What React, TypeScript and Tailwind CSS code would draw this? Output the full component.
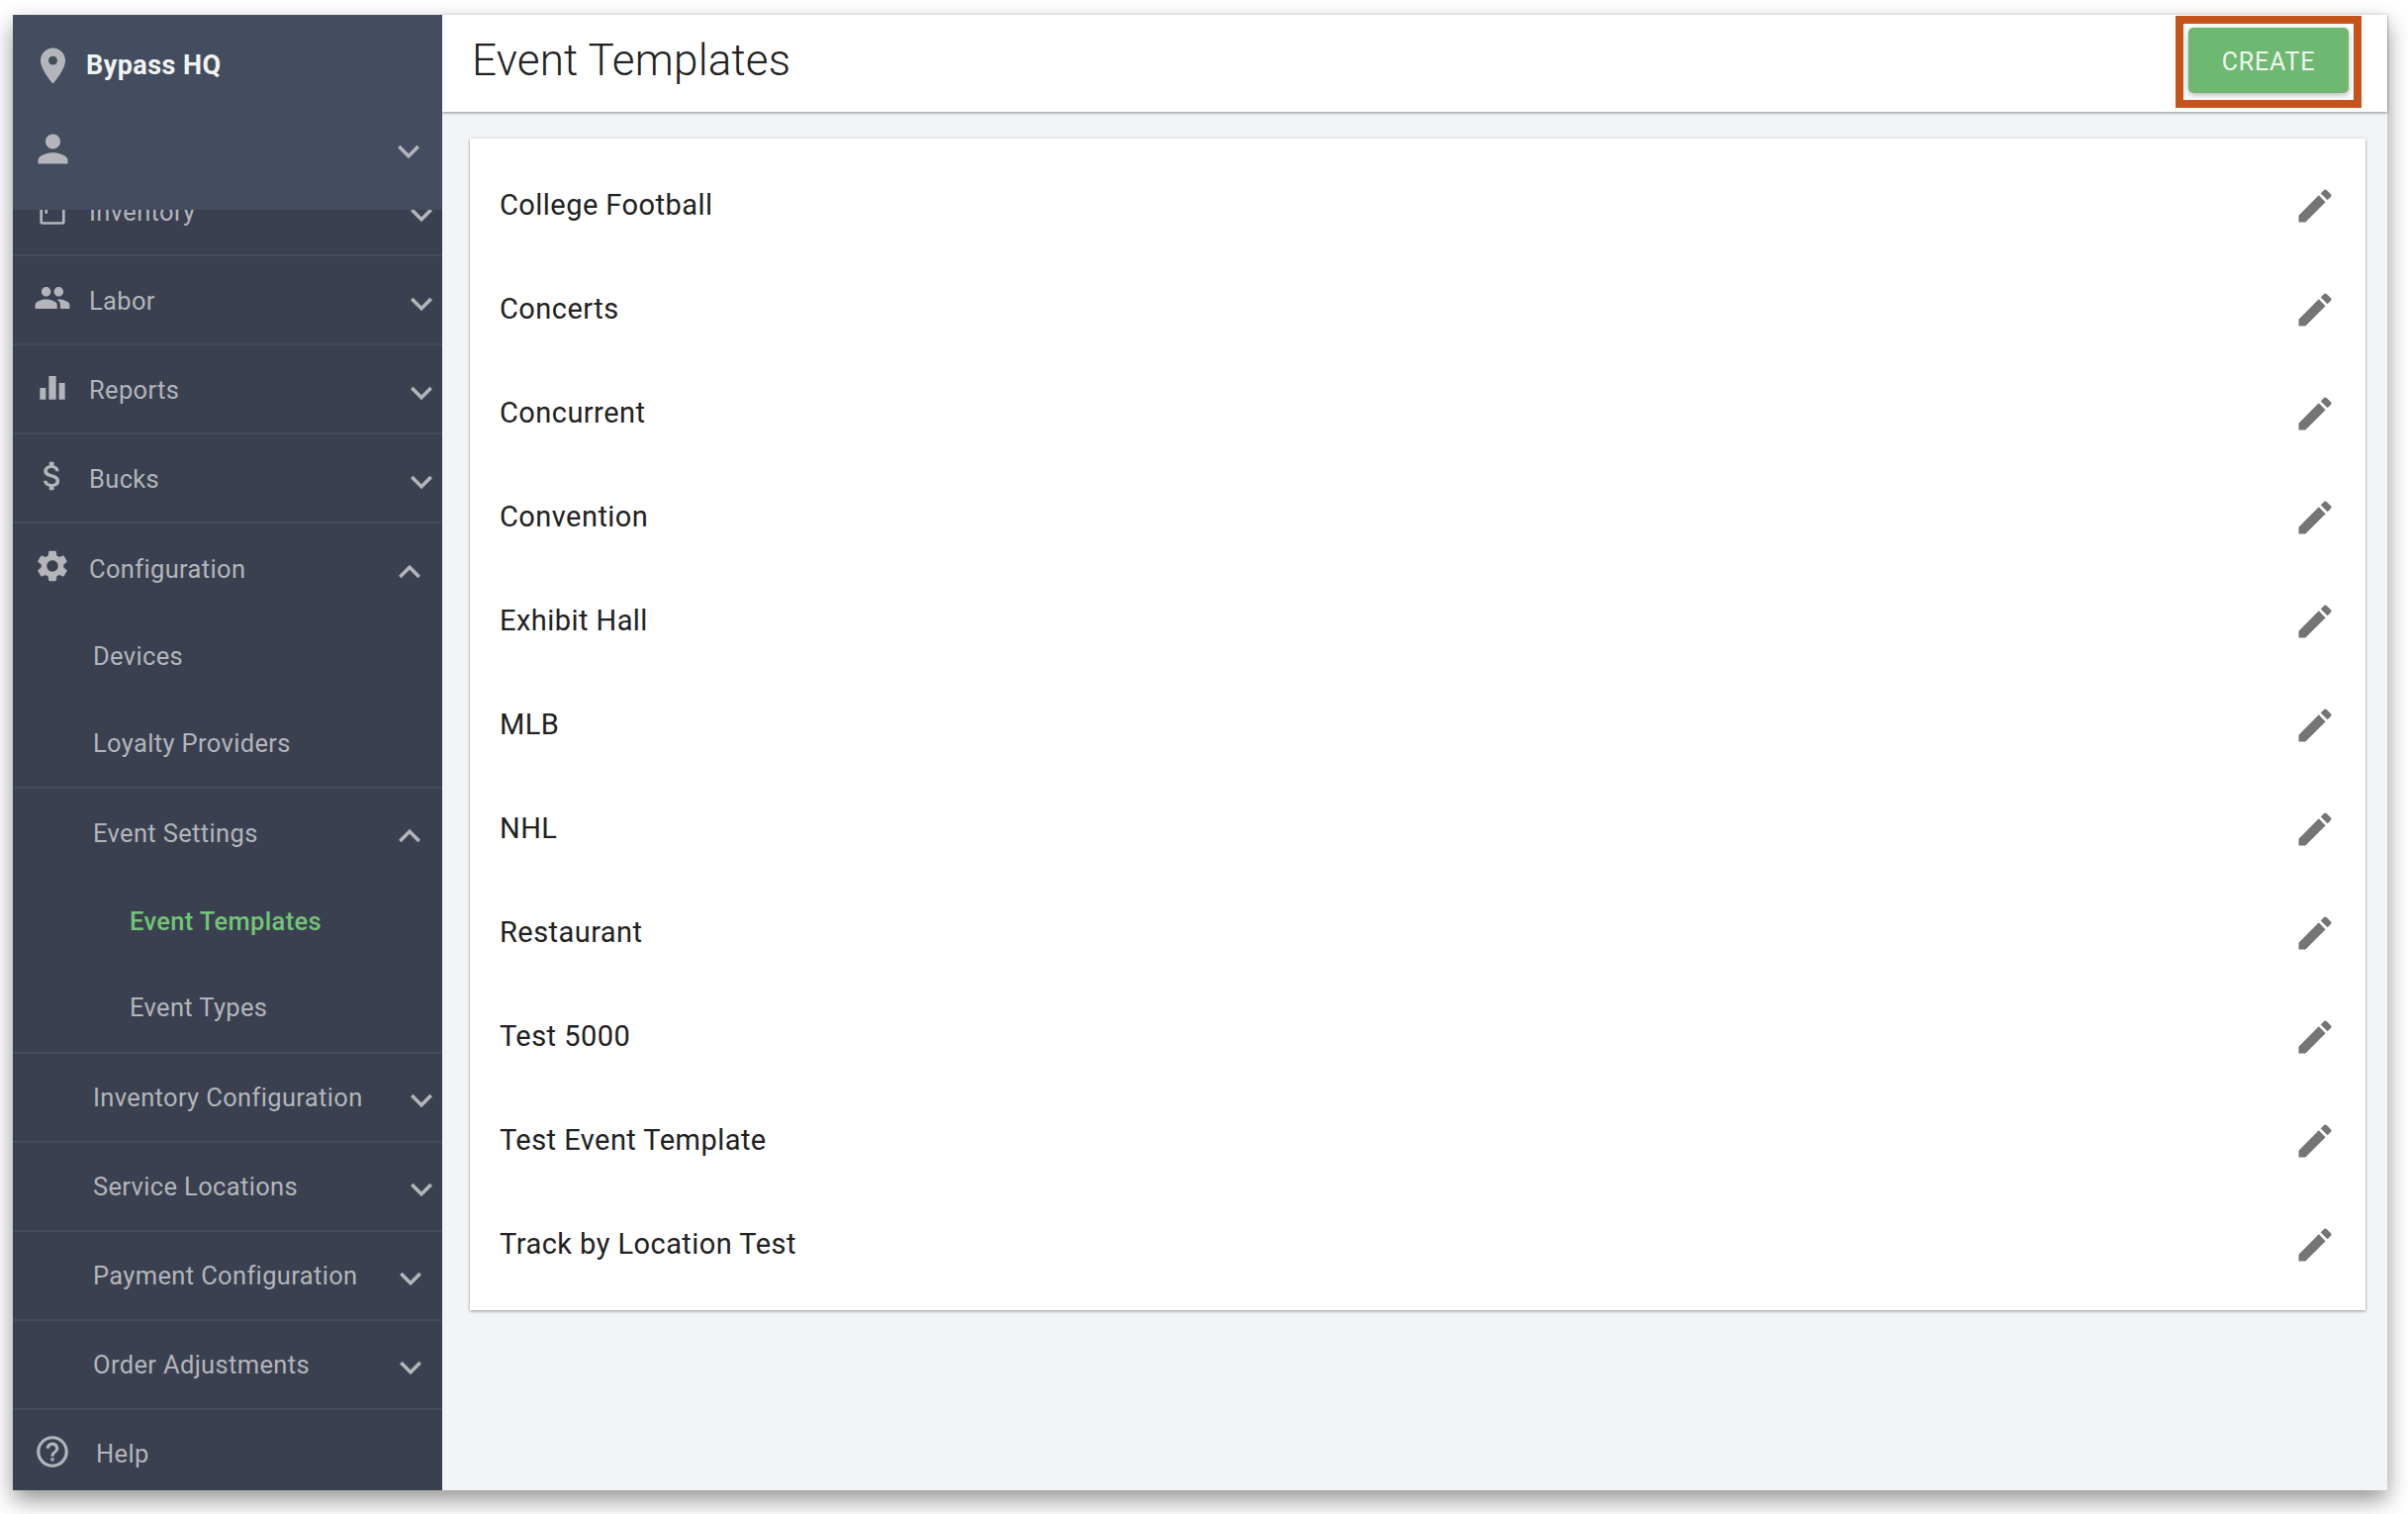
const PATHS = {
  place: 'M12 2C8.13 2 5 5.13 5 9c0 5.25 7 13 7 13s7-7.75 7-13c0-3.87-3.13-7-7-7zm0 9.5c-1.38 0-2.5-1.12-2.5-2.5s1.12-2.5 2.5-2.5 2.5 1.12 2.5 2.5-1.12 2.5-2.5 2.5z',
  person: 'M12 12c2.21 0 4-1.79 4-4s-1.79-4-4-4-4 1.79-4 4 1.79 4 4 4zm0 2c-2.67 0-8 1.34-8 4v2h16v-2c0-2.66-5.33-4-8-4z',
  inventory: 'M4 6h16v14.6c0 .8-.6 1.4-1.4 1.4H5.4c-.8 0-1.4-.6-1.4-1.4V6zm1.7 1.7v12.6h12.6V7.700zM7.200 9h1.700v6H7.200z',
  people: 'M16 11c1.66 0 2.99-1.34 2.99-3S17.66 5 16 5c-1.66 0-3 1.34-3 3s1.34 3 3 3zm-8 0c1.66 0 2.99-1.34 2.99-3S9.66 5 8 5C6.34 5 5 6.34 5 8s1.34 3 3 3zm0 2c-2.33 0-7 1.17-7 3.5V19h14v-2.5c0-2.33-4.67-3.5-7-3.5zm8 0c-.29 0-.62.02-.97.05 1.16.84 1.97 1.97 1.97 3.45V19h6v-2.5c0-2.33-4.67-3.5-7-3.5z',
  chart: 'M4 12.600h3.800V20H4zM9.700 5h4.600v15H9.700zM16.200 9.500H20V20h-3.800z',
  money: 'M11.8 10.9c-2.27-.59-3-1.2-3-2.15 0-1.09 1.01-1.85 2.7-1.85 1.78 0 2.44.85 2.5 2.1h2.21c-.07-1.72-1.12-3.3-3.21-3.81V3h-3v2.16c-1.94.42-3.5 1.68-3.5 3.61 0 2.31 1.91 3.46 4.7 4.13 2.5.6 3 1.48 3 2.41 0 .69-.49 1.79-2.7 1.79-2.06 0-2.87-.92-2.98-2.1h-2.2c.12 2.19 1.76 3.42 3.68 3.83V21h3v-2.15c1.95-.37 3.5-1.5 3.5-3.55 0-2.84-2.43-3.81-4.7-4.4z',
  settings: 'M19.14 12.94c.04-.3.06-.61.06-.94 0-.32-.02-.64-.07-.94l2.03-1.58c.18-.14.23-.41.12-.61l-1.92-3.32c-.12-.22-.37-.29-.59-.22l-2.39.96c-.5-.38-1.03-.7-1.62-.94l-.36-2.54c-.04-.24-.24-.41-.48-.41h-3.84c-.24 0-.43.17-.47.41l-.36 2.54c-.59.24-1.13.57-1.62.94l-2.39-.96c-.22-.08-.47 0-.59.22L2.74 8.87c-.12.21-.08.47.12.61l2.03 1.58c-.05.3-.09.63-.09.94s.02.64.07.94l-2.03 1.58c-.18.14-.23.41-.12.61l1.92 3.32c.12.22.37.29.59.22l2.39-.96c.5.38 1.03.7 1.62.94l.36 2.54c.05.24.24.41.48.41h3.84c.24 0 .44-.17.47-.41l.36-2.54c.59-.24 1.13-.56 1.62-.94l2.39.96c.22.08.47 0 .59-.22l1.92-3.32c.12-.22.07-.47-.12-.61l-2.01-1.58zM12 15.6c-1.98 0-3.6-1.62-3.6-3.6s1.62-3.6 3.6-3.6 3.6 1.62 3.6 3.6-1.62 3.6-3.6 3.6z',
  help: 'M11 18h2v-2h-2v2zm1-16C6.48 2 2 6.48 2 12s4.48 10 10 10 10-4.48 10-10S17.52 2 12 2zm0 18c-4.41 0-8-3.59-8-8s3.59-8 8-8 8 3.59 8 8-3.59 8-8 8zm0-14c-2.21 0-4 1.79-4 4h2c0-1.1.9-2 2-2s2 .9 2 2c0 2-3 1.75-3 5h2c0-2.25 3-2.5 3-5 0-2.21-1.79-4-4-4z',
  down: 'M16.59 8.59L12 13.17 7.41 8.59 6 10l6 6 6-6z',
  up: 'M12 8l-6 6 1.41 1.41L12 10.83l4.59 4.58L18 14z',
  edit: 'M3 17.25V21h3.75L17.81 9.94l-3.75-3.75L3 17.25zM20.71 7.04c.39-.39.39-1.02 0-1.41l-2.34-2.34c-.39-.39-1.02-.39-1.41 0l-1.83 1.83 3.75 3.75 1.83-1.83z',
};

function Icon({ d, className }: { d: string; className: string }) {
  return (
    <svg viewBox="0 0 24 24" className={className} fill="currentColor">
      <path d={d} />
    </svg>
  );
}

type NavRow = {
  label: string;
  icon?: string;
  chevron?: string;
  rowClass: string;
  textClass: string;
  chevClass?: string;
};

const ICON = 'w-[38px] h-[38px] shrink-0 -mt-[4px]';
const TOP = 'text-[25.5px] tracking-[0.35px]';
const SEP = 'border-b-2 border-[#424c5c]';

const NAV: NavRow[] = [
  { label: 'Labor', icon: PATHS.people, chevron: PATHS.down, rowClass: `h-[90px] ${SEP} pl-[21px]`, textClass: 'ml-[18px] mt-[3px]', chevClass: 'mr-[-1px] mt-[8px]' },
  { label: 'Reports', icon: PATHS.chart, chevron: PATHS.down, rowClass: `h-[90px] ${SEP} pl-[21px]`, textClass: 'ml-[18px] mt-[3px]', chevClass: 'mr-[-1px] mt-[8px]' },
  { label: 'Bucks', icon: PATHS.money, chevron: PATHS.down, rowClass: `h-[90px] ${SEP} pl-[21px]`, textClass: 'ml-[18px] mt-[3px]', chevClass: 'mr-[-1px] mt-[8px]' },
  { label: 'Configuration', icon: PATHS.settings, chevron: PATHS.up, rowClass: 'h-[90px] pl-[21px]', textClass: 'ml-[18px] mt-[2px]', chevClass: 'mr-[11px] mt-[8px]' },
  { label: 'Devices', rowClass: 'h-[88px] pl-[81px]', textClass: 'mt-[1px]' },
  { label: 'Loyalty Providers', rowClass: `h-[90px] pb-[2px] ${SEP} pl-[81px]`, textClass: 'mt-[3px]' },
  { label: 'Event Settings', chevron: PATHS.up, rowClass: 'h-[90px] pl-[81px]', textClass: '', chevClass: 'mr-[11px] mt-[6px]' },
  { label: 'Event Templates', rowClass: 'h-[88px] pl-[118px]', textClass: 'text-[#73c476] font-medium' },
  { label: 'Event Types', rowClass: `h-[90px] pb-[2px] ${SEP} pl-[118px]`, textClass: 'mt-[1px]' },
  { label: 'Inventory Configuration', chevron: PATHS.down, rowClass: `h-[90px] ${SEP} pl-[81px]`, textClass: '', chevClass: 'mr-[-1px] mt-[6px]' },
  { label: 'Service Locations', chevron: PATHS.down, rowClass: `h-[90px] ${SEP} pl-[81px]`, textClass: '', chevClass: 'mr-[-1px] mt-[6px]' },
  { label: 'Payment Configuration', chevron: PATHS.down, rowClass: `h-[90px] ${SEP} pl-[81px]`, textClass: '', chevClass: 'mr-[10px] mt-[6px]' },
  { label: 'Order Adjustments', chevron: PATHS.down, rowClass: `h-[90px] ${SEP} pl-[81px]`, textClass: '', chevClass: 'mr-[10px] mt-[6px]' },
];

const TEMPLATES = [
  'College Football',
  'Concerts',
  'Concurrent',
  'Convention',
  'Exhibit Hall',
  'MLB',
  'NHL',
  'Restaurant',
  'Test 5000',
  'Test Event Template',
  'Track by Location Test',
];

function Row({ row }: { row: NavRow }) {
  return (
    <div className={`flex items-center text-[#b3b5ba] ${TOP} ${row.rowClass}`}>
      {row.icon && <Icon d={row.icon} className={ICON} />}
      <span className={row.textClass}>{row.label}</span>
      {row.chevron && (
        <Icon d={row.chevron} className={`ml-auto w-[44px] h-[44px] shrink-0 text-[#b3b5ba] ${row.chevClass}`} />
      )}
    </div>
  );
}

export default function App() {
  return (
    <div className="min-h-[1530px] bg-white pt-[15px] pl-[13px] pr-[21px] pb-[24px] font-['Roboto',sans-serif]">
      <div className="flex h-[1491px] shadow-[0_10px_22px_rgba(0,0,0,0.42)]">
        {/* Sidebar */}
        <aside className="flex w-[434px] shrink-0 flex-col overflow-hidden bg-[#3a4050]">
          <div className="relative z-10 h-[197px] shrink-0 bg-[#434d5f]">
            <div className="flex h-[100px] items-center pl-[19px] pt-[3px]">
              <Icon d={PATHS.place} className="-mt-[1px] h-[43px] w-[43px] shrink-0 text-[#b3b5ba]" />
              <span className="ml-[12px] text-[27px] font-bold tracking-[0.45px] text-[#f1f2f3]">Bypass HQ</span>
            </div>
            <div className="flex h-[70px] items-center pl-[18px] pr-[12px]">
              <Icon d={PATHS.person} className="h-[45px] w-[45px] shrink-0 text-[#b3b5ba]" />
              <Icon d={PATHS.down} className="ml-auto mt-[6px] h-[44px] w-[44px] text-[#b3b5ba]" />
            </div>
          </div>
          <div className="min-h-0 flex-1 overflow-hidden">
            <div className={`-mt-[43px] flex h-[90px] items-center ${SEP} pl-[21px] text-[#b3b5ba] ${TOP}`}>
              <Icon d={PATHS.inventory} className={ICON} />
              <span className="ml-[18px] mt-[3px]">Inventory</span>
              <Icon d={PATHS.down} className="ml-auto mr-[-1px] mt-[8px] h-[44px] w-[44px]" />
            </div>
            {NAV.map((row) => (
              <Row key={row.label} row={row} />
            ))}
            <div className={`flex h-[81px] items-center pl-[21px] text-[#b3b5ba] ${TOP}`}>
              <Icon d={PATHS.help} className="mt-[3px] h-[38px] w-[38px] shrink-0" />
              <span className="ml-[25px] mt-[8px]">Help</span>
            </div>
          </div>
        </aside>

        {/* Main */}
        <main className="flex min-w-0 flex-1 flex-col bg-[#f3f4f6]">
          <header className="flex h-[98px] shrink-0 items-start justify-between bg-white pl-[30px] pr-[39px] shadow-[0_1px_3px_rgba(0,0,0,0.45)]">
            <h1 className="mt-[16px] text-[44px] font-light leading-[60px] tracking-[0.2px] text-[#212121]">Event Templates</h1>
            <div className="relative mt-[13px]">
              <button className="flex h-[66px] w-[162px] items-center justify-center rounded-[5px] bg-[#6fb872] pt-[3px] text-[25px] tracking-[0.8px] text-[#eef6ee] shadow-[0_2px_6px_rgba(0,0,0,0.3)]">
                CREATE
              </button>
              <div className="absolute -bottom-[15px] -left-[13px] -right-[13px] -top-[12px] border-[8px] border-[#c5531a]" />
            </div>
          </header>
          <section className="ml-[28px] mr-[22px] mt-[27px] bg-white pb-[15px] pt-[14px] shadow-[0_1px_3px_rgba(0,0,0,0.4)]">
            {TEMPLATES.map((name) => (
              <div key={name} className="flex h-[105px] items-center justify-between pl-[30px] pr-[29px]">
                <span className="mt-[3px] text-[29px] tracking-[0.45px] text-[#212121]">{name}</span>
                <Icon d={PATHS.edit} className="mt-[2px] h-[44px] w-[44px] text-[#757575]" />
              </div>
            ))}
          </section>
        </main>
      </div>
    </div>
  );
}
